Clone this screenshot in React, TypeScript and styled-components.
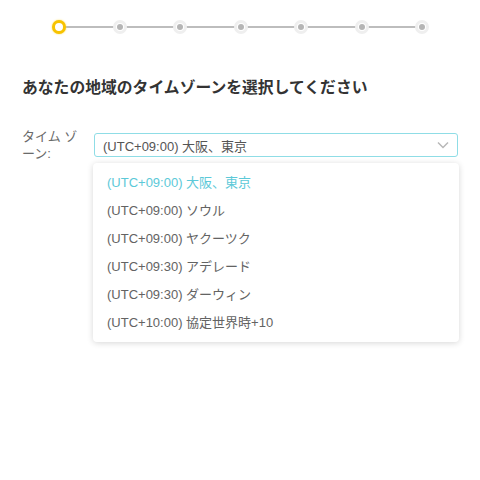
import React from "react";
import styled, { createGlobalStyle } from "styled-components";

const GlobalStyle = createGlobalStyle`
  html, body {
    margin: 0;
    padding: 0;
    background: #ffffff;
    font-family: "Liberation Sans", Arial, "Noto Sans CJK JP", sans-serif;
  }
`;

const Page = styled.div`
  width: 480px;
  height: 480px;
  box-sizing: border-box;
  padding: 0 22px;
`;

const Stepper = styled.div`
  position: relative;
  display: flex;
  justify-content: space-between;
  align-items: center;
  height: 14px;
  margin: 20px 29px 0 30px;

  &::before {
    content: "";
    position: absolute;
    left: 7px;
    right: 7px;
    top: 6px;
    height: 2px;
    background: #bdbdbd;
  }
`;

const Step = styled.div<{ active?: boolean }>`
  position: relative;
  width: 14px;
  height: 14px;
  border-radius: 50%;
  box-sizing: border-box;
  background: #ffffff;
  border: ${({ active }) => (active ? "3px solid #f7c300" : "3px solid #efefef")};
  box-shadow: ${({ active }) => (active ? "0 0 2px #ffd94d" : "none")};
  display: flex;
  align-items: center;
  justify-content: center;

  &::after {
    content: "";
    width: 6px;
    height: 6px;
    border-radius: 50%;
    background: ${({ active }) => (active ? "#ffffff" : "#b5b5b5")};
  }
`;

const Title = styled.h1`
  margin: 42px 0 0;
  font-size: 15.8px;
  font-weight: 700;
  color: #333333;
  line-height: 24px;
  font-family: "Liberation Sans", Arial, "Noto Sans CJK JP", sans-serif;
`;

const FieldRow = styled.div`
  display: flex;
  align-items: flex-start;
  margin-top: 28px;
`;

const Label = styled.label`
  width: 58px;
  margin-right: 14px;
  font-size: 13px;
  line-height: 17px;
  color: #6a6a6a;
`;

const SelectWrap = styled.div`
  position: relative;
  flex: 1;
  margin-top: 5px;
`;

const SelectBox = styled.div`
  height: 24px;
  box-sizing: border-box;
  border: 1px solid #8fdde6;
  border-radius: 3px;
  display: flex;
  align-items: center;
  justify-content: space-between;
  padding: 0 8px 0 8px;
  font-size: 13px;
  color: #555555;
`;

const Chevron = styled.svg`
  width: 14px;
  height: 14px;
  margin-right: -1px;
`;

const Menu = styled.ul`
  position: absolute;
  top: 30px;
  left: -1px;
  right: -1px;
  margin: 0;
  padding: 6px 0 5px;
  list-style: none;
  background: #ffffff;
  border-radius: 4px;
  box-shadow: 0 1px 6px rgba(0, 0, 0, 0.16);
`;

const Option = styled.li<{ selected?: boolean }>`
  height: 28px;
  line-height: 28px;
  padding-left: 14px;
  font-size: 13px;
  color: ${({ selected }) => (selected ? "#5cc9d8" : "#636363")};
`;

const options = [
  "(UTC+09:00) 大阪、東京",
  "(UTC+09:00) ソウル",
  "(UTC+09:00) ヤクーツク",
  "(UTC+09:30) アデレード",
  "(UTC+09:30) ダーウィン",
  "(UTC+10:00) 協定世界時+10",
];

const App = () => {
  return (
    <>
      <GlobalStyle />
      <Page>
        <Stepper>
          {[0, 1, 2, 3, 4, 5, 6].map((i) => (
            <Step key={i} active={i === 0} />
          ))}
        </Stepper>
        <Title>あなたの地域のタイムゾーンを選択してください</Title>
        <FieldRow>
          <Label>タイム ゾーン:</Label>
          <SelectWrap>
            <SelectBox>
              <span>{options[0]}</span>
              <Chevron viewBox="0 0 14 14">
                <path d="M2 4.5 L7 9.5 L12 4.5" fill="none" stroke="#b8b8b8" strokeWidth="1.5" />
              </Chevron>
            </SelectBox>
            <Menu>
              {options.map((o, i) => (
                <Option key={o} selected={i === 0}>
                  {o}
                </Option>
              ))}
            </Menu>
          </SelectWrap>
        </FieldRow>
      </Page>
    </>
  );
};

export default App;
